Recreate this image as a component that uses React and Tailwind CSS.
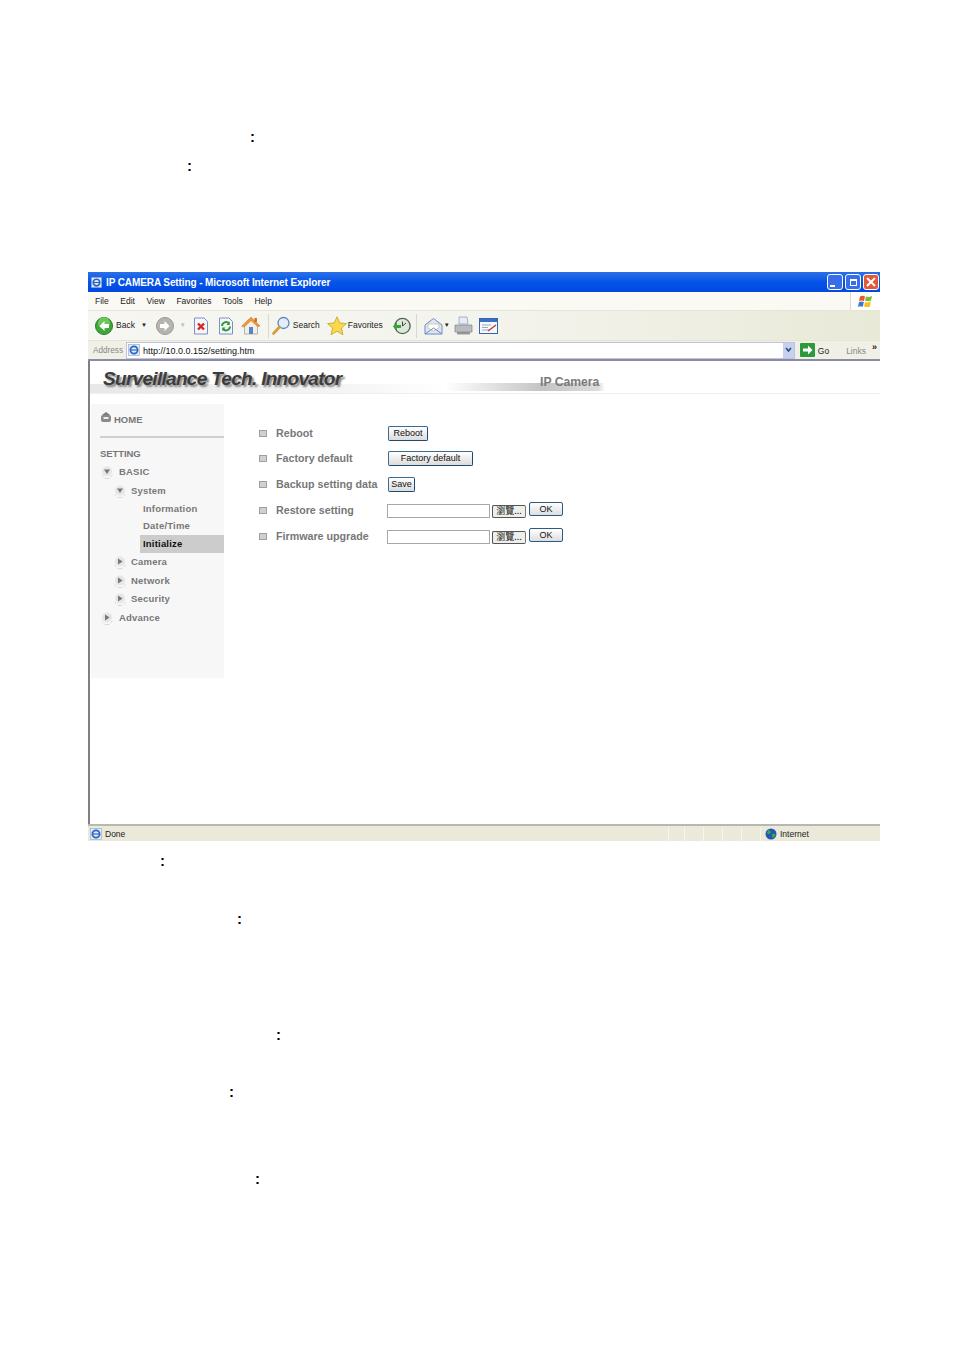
const sans = "font-['Liberation_Sans',Arial,sans-serif]";

function Back() {
  return (
    <svg width="18" height="18" viewBox="0 0 18 18">
      <circle cx="9" cy="9" r="8.5" fill="#3fa83a" stroke="#2a7d28" />
      <circle cx="9" cy="6" r="6" fill="#8edc6e" opacity="0.6" />
      <path d="M9.5 4 L4.5 9 L9.5 14 V11 H14 V7 H9.5 Z" fill="#fff" />
    </svg>
  );
}
function Forward() {
  return (
    <svg width="18" height="18" viewBox="0 0 18 18">
      <circle cx="9" cy="9" r="8.5" fill="#b4b4b0" stroke="#9a9a96" />
      <path d="M8.5 4 L13.5 9 L8.5 14 V11 H4 V7 H8.5 Z" fill="#fff" />
    </svg>
  );
}
function Stop() {
  return (
    <svg width="16" height="18" viewBox="0 0 16 18">
      <path d="M1.5 1 H11 L14.5 4.5 V17 H1.5 Z" fill="#f4f6fc" stroke="#7c90c4" />
      <path d="M5 6.5 L11 12.5 M11 6.5 L5 12.5" stroke="#d8261c" strokeWidth="2.4" />
    </svg>
  );
}
function Refresh() {
  return (
    <svg width="16" height="18" viewBox="0 0 16 18">
      <path d="M1.5 1 H11 L14.5 4.5 V17 H1.5 Z" fill="#f4f6fc" stroke="#7c90c4" />
      <path d="M4 9 A4 4 0 0 1 11 6.5 M12 9.5 A4 4 0 0 1 5 12" fill="none" stroke="#2f9a35" strokeWidth="2" />
      <path d="M11.8 4.5 V8 H8.4 Z M4.2 14 V10.5 H7.6 Z" fill="#2f9a35" />
    </svg>
  );
}
function Home() {
  return (
    <svg width="20" height="19" viewBox="0 0 20 19">
      <path d="M3.5 9 V18 H16.5 V9 L10 3 Z" fill="#f2f0e6" stroke="#9a9a90" strokeWidth="0.7" />
      <path d="M0.8 10 L10 1.2 L19 10 L16.5 10.5 L10 4.5 L3.2 11 Z" fill="#ee9a3c" stroke="#c87020" strokeWidth="0.6" />
      <rect x="8" y="11" width="4" height="7" fill="#5a84c8" />
      <rect x="13.5" y="2" width="2.4" height="4" fill="#c87020" />
    </svg>
  );
}
function Search() {
  return (
    <svg width="19" height="19" viewBox="0 0 19 19">
      <circle cx="11.5" cy="7" r="5.5" fill="#e4eefa" stroke="#5c86b8" strokeWidth="1.3" />
      <path d="M7.5 11 L1.5 17.5" stroke="#d99a3a" strokeWidth="2.6" strokeLinecap="round" />
    </svg>
  );
}
function Star() {
  return (
    <svg width="20" height="20" viewBox="0 0 20 20">
      <path d="M10 0.8 L12.8 7 L19.4 7.6 L14.4 12 L16 18.8 L10 15.2 L4 18.8 L5.6 12 L0.6 7.6 L7.2 7 Z" fill="#fbd84a" stroke="#c8a020" strokeWidth="0.8" />
    </svg>
  );
}
function History() {
  return (
    <svg width="19" height="18" viewBox="0 0 19 18">
      <circle cx="10.5" cy="9" r="7.6" fill="#dfe6dc" stroke="#4e6a50" strokeWidth="1.4" />
      <path d="M10.5 4.5 V9 L14 6" fill="none" stroke="#444" strokeWidth="1" />
      <path d="M0.8 9.5 L5 5.5 V8 H9 V11 H5 V13.5 Z" fill="#3fa03a" />
    </svg>
  );
}
function Mail() {
  return (
    <svg width="19" height="18" viewBox="0 0 19 18">
      <path d="M1 8 L9.5 1.5 L18 8 V17 H1 Z" fill="#dce6f6" stroke="#6c8cc0" />
      <path d="M4 7 H15 V11 L9.5 14 L4 11 Z" fill="#fff" stroke="#c8b070" strokeWidth="0.6" />
      <path d="M1 17 L9.5 11 L18 17" fill="none" stroke="#6c8cc0" />
    </svg>
  );
}
function Printer() {
  return (
    <svg width="19" height="19" viewBox="0 0 19 19">
      <path d="M5 1 L13 1 L14 8 H5 Z" fill="#e4ecf8" stroke="#8a9ab0" strokeWidth="0.7" />
      <path d="M1 9 H18 V16 H1 Z" fill="#b8bcc0" stroke="#80848a" strokeWidth="0.7" />
      <path d="M3 16 H16 V18.4 H3 Z" fill="#909498" />
    </svg>
  );
}
function Edit() {
  return (
    <svg width="19" height="16" viewBox="0 0 19 16">
      <rect x="0.5" y="0.5" width="18" height="15" fill="#f6f8fc" stroke="#3a64a8" />
      <rect x="1" y="1" width="17" height="3" fill="#3a70c4" />
      <path d="M3 7 H12 M3 9.5 H9 M3 12 H11" stroke="#8aa0c0" strokeWidth="0.9" />
      <path d="M9 13 L17 7" stroke="#c84030" strokeWidth="1.5" />
    </svg>
  );
}
function Ie({ size = 12 }) {
  return (
    <svg width={size} height={size} viewBox="0 0 12 12">
      <rect x="0.5" y="0.5" width="11" height="11" fill="#e4ecf8" stroke="#8aa4cc" strokeWidth="0.6" />
      <circle cx="6" cy="6" r="3.6" fill="none" stroke="#2a68c0" strokeWidth="1.8" />
      <path d="M2.5 6 H9.5" stroke="#2a68c0" strokeWidth="1.2" />
    </svg>
  );
}
function WinFlag() {
  return (
    <svg width="15" height="15" viewBox="0 0 15 15">
      <path d="M2 2.5 Q4.5 1 7 2.5 L6 7 Q3.5 5.8 1 7 Z" fill="#e8562a" />
      <path d="M8 2.5 Q10.5 3.6 14 2 L13 6.6 Q10 7.8 7.1 6.8 Z" fill="#7cb83a" />
      <path d="M1 8 Q3.5 6.8 5.8 8 L4.9 12.8 Q2.5 11.6 0 13 Z" fill="#3a78d0" />
      <path d="M7 8 Q10 9 12.8 7.6 L12 12.4 Q9 13.6 6 12.6 Z" fill="#f4c020" />
    </svg>
  );
}
function WinBtn({ children, red }) {
  return (
    <div className={`flex h-[16px] w-[16px] items-center justify-center rounded-[3px] border border-white ${red ? "bg-[#e2583a]" : "bg-[#3a6ee8]"}`}>
      {children}
    </div>
  );
}
function Arrow({ down }) {
  return (
    <svg width="12" height="13" viewBox="0 0 12 13" className="shrink-0">
      <path d="M0.5 7 A5.5 5.5 0 0 0 11.5 7 L11 10 A5.5 4 0 0 1 1 10 Z" fill="#8e8e8e" />
      <circle cx="6" cy="5.5" r="5" fill="#e6e6e6" />
      {down ? <path d="M3 3.6 H9 L6 8 Z" fill="#777" /> : <path d="M4 2.4 L8.6 5.5 L4 8.6 Z" fill="#777" />}
    </svg>
  );
}
function Bullet() {
  return <div className="mr-[9px] h-[7px] w-[8px] shrink-0 border border-[#a0a0a0] bg-[#d0d0d0]" />;
}
function FormBtn({ children, w, cls = "" }) {
  return (
    <button className={`flex h-[15px] items-center justify-center rounded-[2px] border border-[#1c4a70] border-l-[#3c6a90] border-t-[#3c6a90] bg-gradient-to-b from-white to-[#dcdcdc] text-[9px] leading-none text-[#111] ${w} ${cls}`}>
      {children}
    </button>
  );
}
function Row({ h, label, children }) {
  return (
    <div className={`flex items-center ${h}`}>
      <Bullet />
      <div className="w-[111px] shrink-0 text-[10.7px] font-bold text-[#777]">{label}</div>
      {children}
    </div>
  );
}
function FileRow() {
  return (
    <div className="flex items-center">
      <div className="mt-[2px] h-[14px] w-[103px] border border-[#a8a8a8] bg-white" />
      <button className="ml-[2px] mt-[2px] h-[13px] w-[34px] rounded-[2px] border border-[#555] border-r-[#777] bg-[#eeeeea] font-['Noto_Sans_CJK_TC','Liberation_Sans',sans-serif] text-[9px] leading-[10px] text-[#222]">瀏覽...</button>
      <button className="ml-[3px] -mt-[2px] h-[14px] w-[34px] rounded-[2px] border border-[#2c5a80] bg-gradient-to-b from-white to-[#dedede] text-[9px] leading-none text-[#111]">OK</button>
    </div>
  );
}
function Colon({ cls }) {
  return <p className={`font-['Liberation_Sans',sans-serif] text-[15px] font-bold leading-[17px] text-black ${cls}`}>:</p>;
}
function Side({ pl, h, icon, cls = "text-[#777]", children }) {
  return (
    <div className={`flex items-center ${pl} ${h} text-[9.5px] font-bold tracking-[0.2px] ${cls}`}>
      {icon}
      {children}
    </div>
  );
}

export default function App() {
  return (
    <div className={`h-[1350px] w-[954px] overflow-hidden bg-white ${sans}`}>
      <div className="h-[272px] pt-[128px]">
        <Colon cls="pl-[250px]" />
        <Colon cls="mt-[12px] pl-[187px]" />
      </div>

      <div className="ml-[88px] flex h-[569px] w-[792px] flex-col">
        <div className="flex h-[20px] shrink-0 items-center bg-gradient-to-b from-[#2a70e8] via-[#0454e8] to-[#0448e0] pl-[3px] pr-[1px]">
          <Ie size={11} />
          <div className="ml-[4px] flex-1 text-[10px] font-bold tracking-[-0.1px] text-white">IP CAMERA Setting - Microsoft Internet Explorer</div>
          <div className="flex gap-[2px]">
            <WinBtn><div className="mt-[7px] mr-[5px] h-[2px] w-[5px] bg-white" /></WinBtn>
            <WinBtn>
              <div className="h-[7px] w-[7px] border border-t-2 border-white" />
            </WinBtn>
            <WinBtn red>
              <svg width="10" height="10" viewBox="0 0 10 10"><path d="M1 1 L9 9 M9 1 L1 9" stroke="#fff" strokeWidth="2" /></svg>
            </WinBtn>
          </div>
        </div>

        <div className="flex h-[19px] shrink-0 items-center border-b border-[#e8e4d8] bg-[#faf9f4] text-[8.5px] text-[#222]">
          <div className="flex flex-1 gap-[11.6px] pl-[7px]">
            <span>File</span><span>Edit</span><span>View</span><span>Favorites</span><span>Tools</span><span>Help</span>
          </div>
          <div className="flex h-full w-[30px] items-center justify-center border-l border-[#ddd8c8] bg-white"><WinFlag /></div>
        </div>

        <div className="flex h-[30px] shrink-0 items-center border-b border-[#e8e4d4] bg-gradient-to-r from-[#f6f6f2] via-[#f4f4ee] to-[#e9e9d8] pl-[7px] text-[8.5px] text-[#222]">
          <Back />
          <span className="ml-[3px]">Back</span>
          <span className="ml-[6px] text-[6px]">▼</span>
          <span className="ml-[9px] flex"><Forward /></span>
          <span className="ml-[6px] text-[6px] text-[#bbb]">▼</span>
          <span className="ml-[7px] flex"><Stop /></span>
          <span className="ml-[9px] flex"><Refresh /></span>
          <span className="ml-[7px] flex"><Home /></span>
          <div className="ml-[7px] mr-[3px] h-[24px] w-px bg-[#d8d8cc]" />
          <Search />
          <span className="ml-[2px]">Search</span>
          <span className="ml-[7px] flex"><Star /></span>
          <span className="ml-[1px]">Favorites</span>
          <span className="ml-[9px] flex"><History /></span>
          <div className="ml-[5px] mr-[7px] h-[24px] w-px bg-[#d8d8cc]" />
          <Mail />
          <span className="ml-[1px] text-[6px]">▼</span>
          <span className="ml-[4px] flex"><Printer /></span>
          <span className="ml-[6px] flex"><Edit /></span>
        </div>

        <div className="flex h-[20px] shrink-0 items-center border-b-2 border-[#8c8ca0] bg-[#f1f0e6] text-[8.5px]">
          <span className="mt-[3px] pl-[5px] text-[8.2px] text-[#888]">Address</span>
          <div className="ml-[3px] flex h-[17px] flex-1 items-center border border-[#c0c0e0] bg-white pl-[1px]">
            <Ie />
            <span className="ml-[3px] mt-[3px] text-[9px] text-[#111]">http://10.0.0.152/setting.htm</span>
            <div className="ml-auto flex h-[15px] w-[11px] items-center justify-center bg-[#c4d2f0]">
              <svg width="7" height="6" viewBox="0 0 7 6"><path d="M1 1 L3.5 4 L6 1" fill="none" stroke="#2c4a80" strokeWidth="1.6" /></svg>
            </div>
          </div>
          <div className="ml-[5px] flex h-[14px] w-[15px] items-center justify-center rounded-[1px] bg-[#2c9a3c]">
            <svg width="11" height="10" viewBox="0 0 11 10"><path d="M6 0.5 L10.5 5 L6 9.5 V6.5 H1 V3.5 H6 Z" fill="#fff" /></svg>
          </div>
          <span className="ml-[3px] mt-[3px] text-[#222]">Go</span>
          <span className="ml-[17px] mt-[3px] text-[#888]">Links</span>
          <span className="ml-[6px] mr-[3px] -mt-[4px] text-[9px] font-bold text-[#222]">»</span>
        </div>

        <div className="flex min-h-0 flex-1 border-l-2 border-[#808080]">
          <div className="flex min-w-0 flex-1 flex-col">
            <div className="flex h-[33px] shrink-0 border-b border-[#f0f0ea] bg-white">
              <div className="w-[355px] bg-[linear-gradient(to_right,#e8e8e8,#f4f4f4_70%,#ffffff)] bg-[length:100%_9px] bg-bottom bg-no-repeat pl-[13px]">
                <div className="pt-[4px] text-[19px] font-bold italic leading-[28px] tracking-[-0.7px] text-[#3c3c3c] [text-shadow:2px_2px_2px_#808080]">Surveillance Tech. Innovator</div>
              </div>
              <div className="w-[160px] bg-[linear-gradient(to_right,#ffffff,#c4c4c4_60%,#dcdcdc_96%,#ffffff)] bg-[length:100%_8px] bg-[position:0_22px] bg-no-repeat pl-[95px] pt-[13px] text-[12.2px] font-bold leading-[16px] text-[#7a7a7a]">IP Camera</div>
            </div>

            <div className="flex min-h-0 flex-1">
              <aside className="ml-px mt-[10px] h-[274px] w-[133px] shrink-0 bg-[#f7f7f7] pt-[6px]">
                <div className="flex h-[20px] items-center pl-[9px] text-[9.5px] font-bold text-[#777]">
                  <svg width="12" height="13" viewBox="0 0 12 13" className="-mt-[5px] mr-[2px]">
                    <path d="M6 1 L10 4 V4 H2 Z" fill="#7a7a7a" />
                    <rect x="1" y="4" width="10" height="7" rx="2" fill="#8a8a8a" />
                    <rect x="3.5" y="6" width="5" height="2" fill="#eee" />
                  </svg>
                  HOME
                </div>
                <div className="ml-[9px] mt-[6px] h-[2px] bg-[#cfcfcf]" />
                <div className="mt-[8px] flex h-[17px] items-center pl-[9px] text-[9.5px] font-bold tracking-[-0.1px] text-[#777]">SETTING</div>
                <Side pl="pl-[10px]" h="h-[18px]" icon={<span className="mr-[6px] flex"><Arrow down /></span>}>BASIC</Side>
                <Side pl="pl-[23px]" h="h-[20px]" icon={<span className="mr-[5px] flex"><Arrow down /></span>}>System</Side>
                <Side pl="pl-[52px]" h="h-[17px]">Information</Side>
                <Side pl="pl-[52px]" h="h-[17px]">Date/Time</Side>
                <Side pl="pl-[3px]" h="h-[18px] ml-[49px] bg-[#cccccc]" cls="text-[#111]">Initialize</Side>
                <Side pl="pl-[23px]" h="h-[19px]" icon={<span className="mr-[5px] flex"><Arrow /></span>}>Camera</Side>
                <Side pl="pl-[23px]" h="h-[18px]" icon={<span className="mr-[5px] flex"><Arrow /></span>}>Network</Side>
                <Side pl="pl-[23px]" h="h-[19px]" icon={<span className="mr-[5px] flex"><Arrow /></span>}>Security</Side>
                <Side pl="pl-[10px]" h="h-[19px]" icon={<span className="mr-[6px] flex"><Arrow /></span>}>Advance</Side>
              </aside>

              <main className="ml-[35px] mt-[27px] flex-1">
                <Row h="h-[25px]" label="Reboot"><FormBtn w="w-[40px] ml-[1px]">Reboot</FormBtn></Row>
                <Row h="h-[25px]" label="Factory default"><FormBtn w="w-[85px] ml-[1px]">Factory default</FormBtn></Row>
                <Row h="h-[26px]" label="Backup setting data"><FormBtn w="w-[27px] ml-[1px]">Save</FormBtn></Row>
                <Row h="h-[26px]" label="Restore setting"><FileRow /></Row>
                <Row h="h-[26px]" label="Firmware upgrade"><FileRow /></Row>
              </main>
            </div>
          </div>
        </div>

        <div className="flex h-[17px] shrink-0 items-center border-t-2 border-[#b8b8b0] bg-[#ebe9d9] pl-[2px] pt-px text-[8.5px] text-[#222]">
          <Ie />
          <span className="ml-[3px] flex-1">Done</span>
          <div className="flex h-full">
            <div className="w-[16px] border-l border-[#f6f6ee]" />
            <div className="w-[19px] border-l border-[#f6f6ee]" />
            <div className="w-[19px] border-l border-[#f6f6ee]" />
            <div className="w-[19px] border-l border-[#f6f6ee]" />
            <div className="w-[19px] border-l border-[#f6f6ee]" />
          </div>
          <div className="flex h-full w-[120px] items-center border-l border-[#f6f6ee] pl-[4px]">
            <svg width="12" height="12" viewBox="0 0 12 12">
              <circle cx="6" cy="6" r="5.5" fill="#2458b0" />
              <path d="M3 2 Q6 3 5.5 5 Q3 7 2 5 Z M7 6 Q10 5 10.5 7 Q8.5 10.5 7.5 9.5 Z" fill="#38b040" />
            </svg>
            <span className="ml-[3px]">Internet</span>
          </div>
        </div>
      </div>

      <Colon cls="mt-[11px] pl-[160px]" />
      <Colon cls="mt-[41px] pl-[237px]" />
      <Colon cls="mt-[99px] pl-[276px]" />
      <Colon cls="mt-[40px] pl-[229px]" />
      <Colon cls="mt-[70px] pl-[255px]" />
    </div>
  );
}
